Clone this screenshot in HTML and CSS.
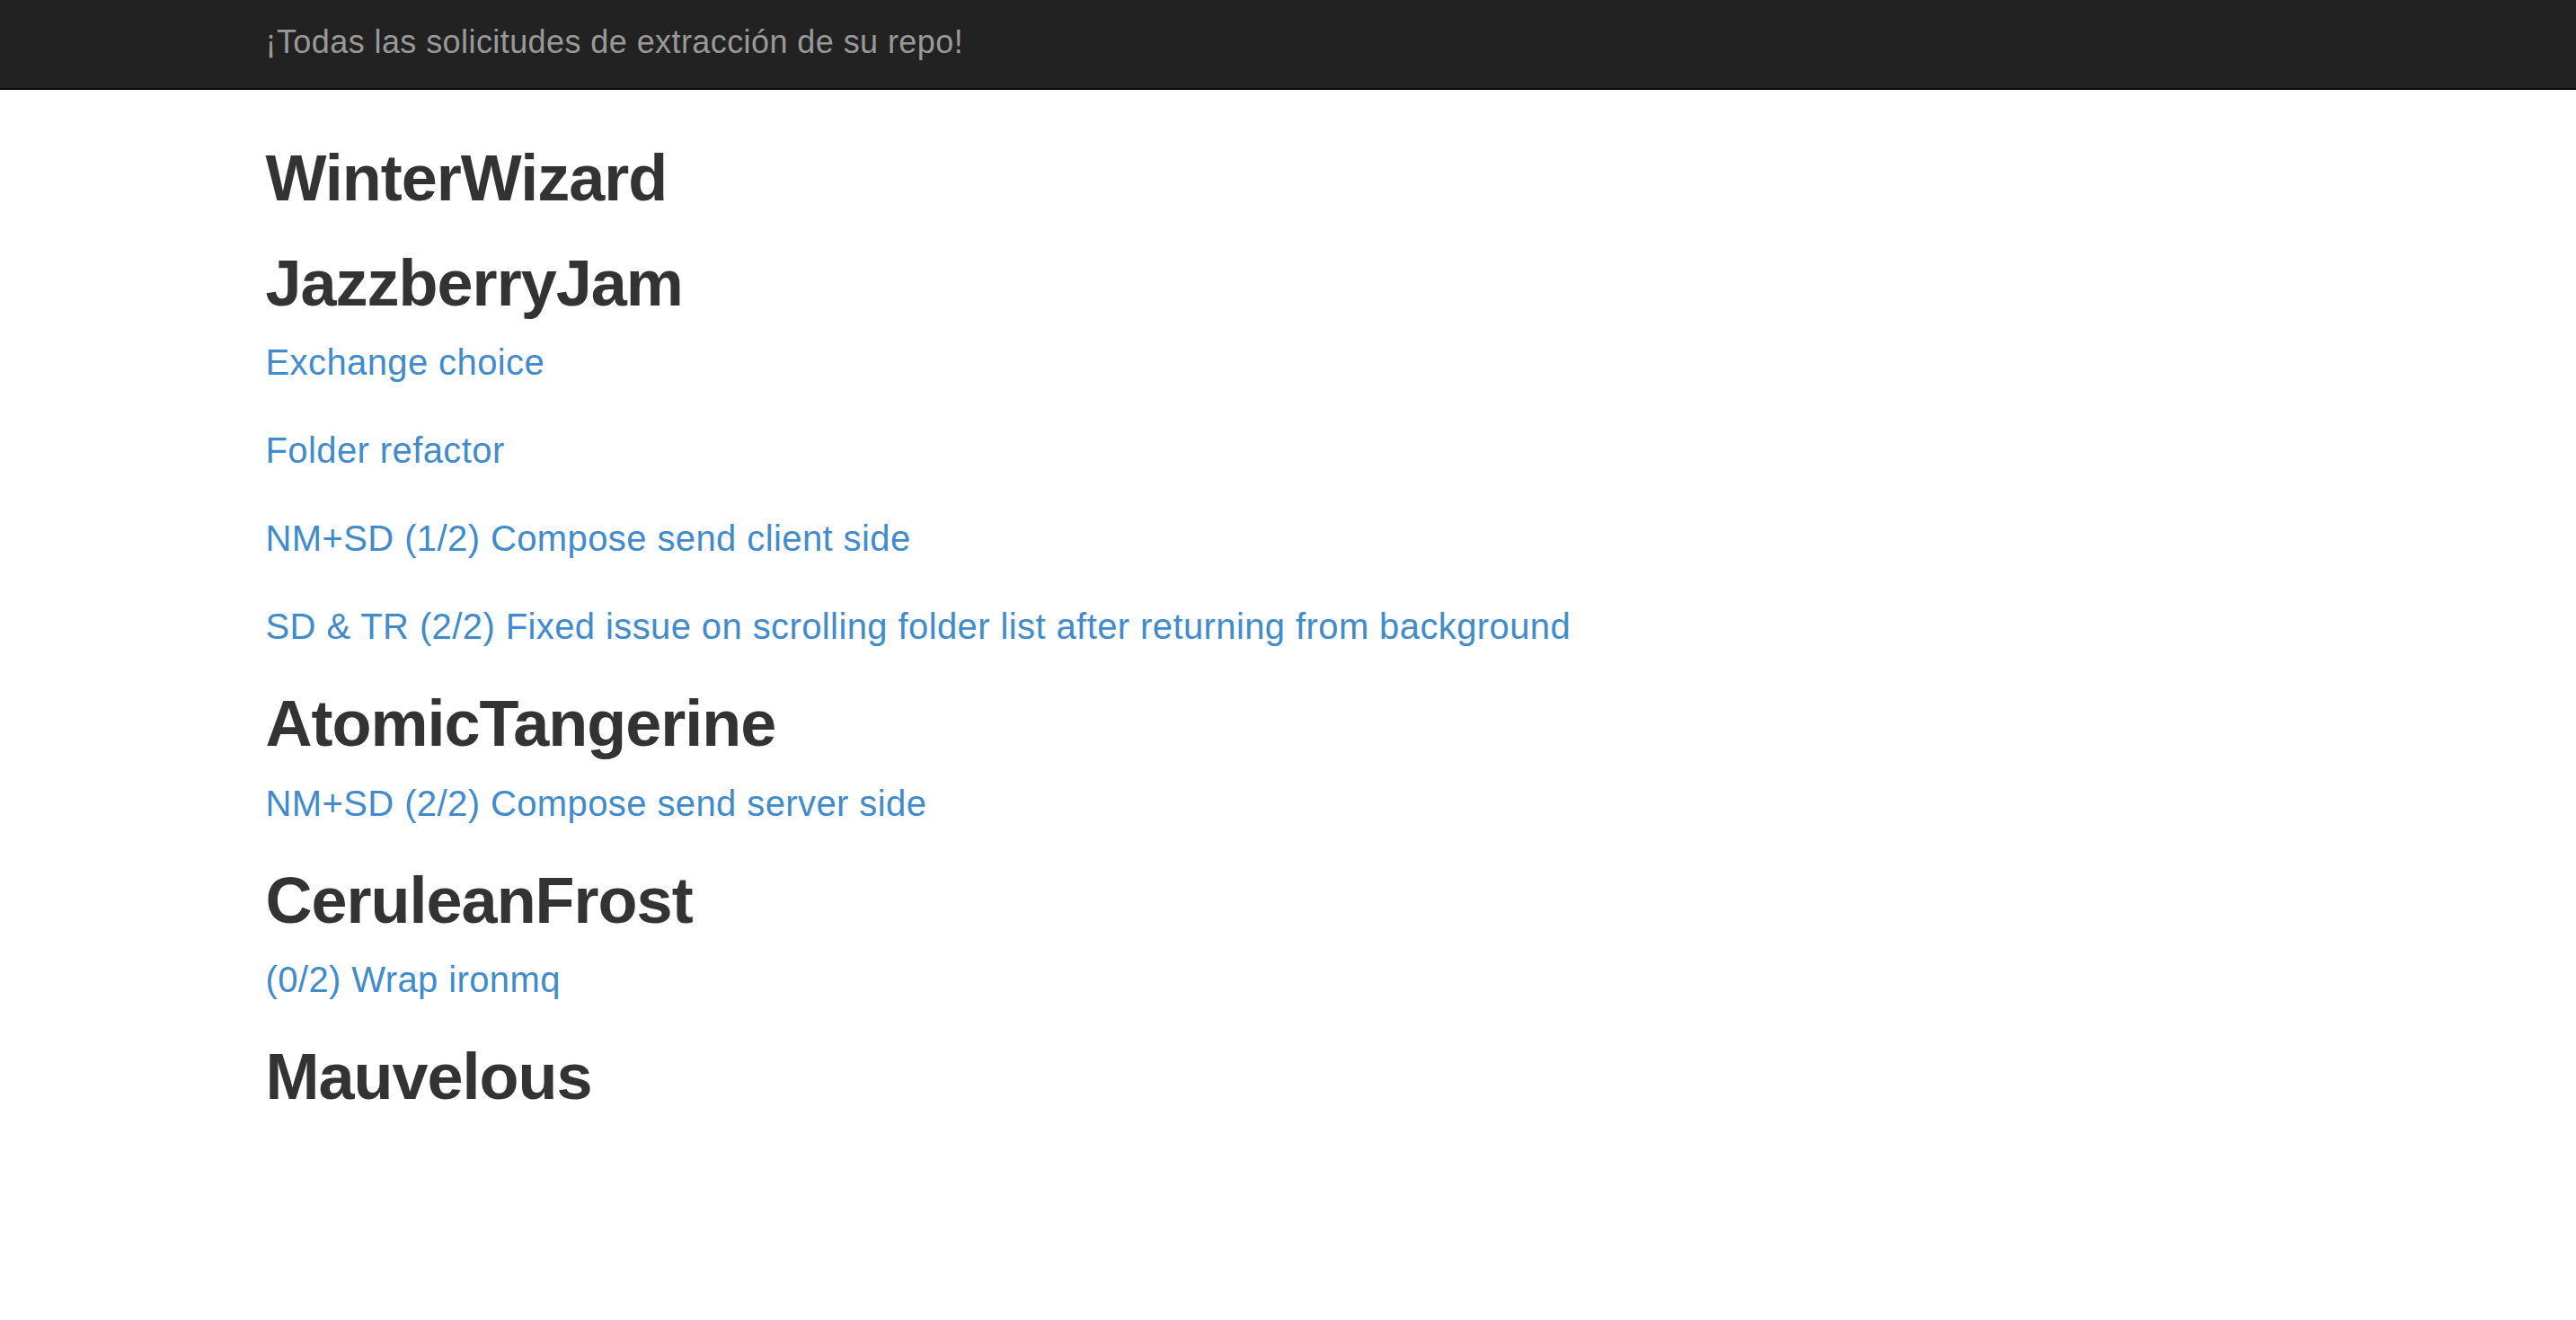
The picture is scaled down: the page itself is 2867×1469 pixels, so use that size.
FILE: index.html
```html
<!DOCTYPE html>
<html lang="es">
<head>
<meta charset="utf-8">
<title>Solicitudes de extracción</title>
<link rel="stylesheet" href="styles.css">
</head>
<body>
<nav class="navbar">
  <div class="container">
    <a class="brand" href="#">¡Todas las solicitudes de extracción de su repo!</a>
  </div>
</nav>
<main class="container main">
  <h1 class="repo">WinterWizard</h1>
  <h1 class="repo">JazzberryJam</h1>
  <a class="pr" href="#">Exchange choice</a>
  <a class="pr" href="#">Folder refactor</a>
  <a class="pr" href="#">NM+SD (1/2) Compose send client side</a>
  <a class="pr" href="#">SD &amp; TR (2/2) Fixed issue on scrolling folder list after returning from background</a>
  <h1 class="repo">AtomicTangerine</h1>
  <a class="pr" href="#">NM+SD (2/2) Compose send server side</a>
  <h1 class="repo">CeruleanFrost</h1>
  <a class="pr" href="#">(0/2) Wrap ironmq</a>
  <h1 class="repo">Mauvelous</h1>
</main>
</body>
</html>
```
FILE: styles.css
```css
html, body {
  margin: 0;
  padding: 0;
  background: #ffffff;
}
body {
  font-family: "Liberation Sans", Arial, Helvetica, sans-serif;
  color: #333333;
}
.container {
  width: 2340px;
  margin: 0 auto;
  padding: 0 32px;
  box-sizing: border-box;
}
.navbar {
  background: #222222;
  border-bottom: 2px solid #080808;
  height: 100px;
  box-sizing: border-box;
}
.brand {
  display: block;
  padding: 27px 0 31px;
  font-size: 36px;
  line-height: 40px;
  letter-spacing: 0.42px;
  color: #999999;
  text-decoration: none;
}
.main {
  padding-top: 21px;
  display: flow-root;
}
.repo {
  font-size: 72px;
  line-height: 79.2px;
  font-weight: 700;
  letter-spacing: -1px;
  color: #333333;
  margin: 38px 0 19px;
}
.pr {
  display: block;
  width: max-content;
  font-size: 40px;
  line-height: 58px;
  letter-spacing: 0.4px;
  margin: 0 0 40px;
  color: #428bca;
  text-decoration: none;
}
```
